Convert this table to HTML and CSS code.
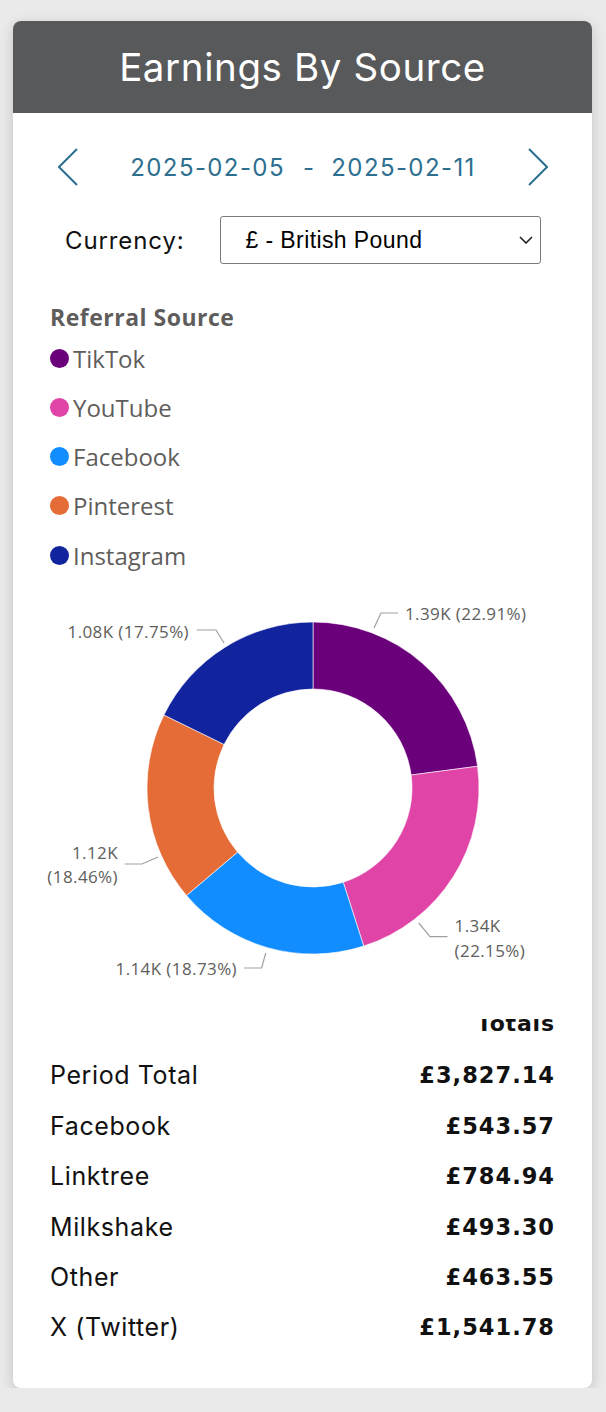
FILE: index.html
```html
<!DOCTYPE html>
<html lang="en">
<head>
<meta charset="utf-8">
<title>Earnings By Source</title>
<link rel="stylesheet" href="styles.css">
</head>
<body>
<div class="card">
  <div class="header"><span class="title">Earnings By Source</span></div>

  <div class="nav">
    <svg class="chev" width="20" height="38" viewBox="0 0 20 38"><polyline points="19,1 1,19 19,37"/></svg>
    <div class="dates"><span>2025-02-05</span><span class="sep">-</span><span>2025-02-11</span></div>
    <svg class="chev" width="20" height="38" viewBox="0 0 20 38"><polyline points="1,1 19,19 1,37"/></svg>
  </div>

  <div class="currency">
    <span class="cur-label">Currency:</span>
    <div class="select">
      <span>£ - British Pound</span>
      <svg class="caret" width="14" height="8" viewBox="0 0 14 8"><polyline points="1,1 7,7 13,1"/></svg>
    </div>
  </div>

  <div class="legend">
    <div class="legend-title">Referral Source</div>
    <div class="legend-item"><span class="dot c-tiktok"></span>TikTok</div>
    <div class="legend-item"><span class="dot c-youtube"></span>YouTube</div>
    <div class="legend-item"><span class="dot c-facebook"></span>Facebook</div>
    <div class="legend-item"><span class="dot c-pinterest"></span>Pinterest</div>
    <div class="legend-item"><span class="dot c-instagram"></span>Instagram</div>
  </div>

  <svg class="donut" width="579" height="400" viewBox="13 590 579 400">
    <g class="slices">
      <path fill="#6b007b" d="M313,622 A166,166 0 0 1 477.57,766.27 L411.15,775.04 A99,99 0 0 0 313,689 Z"/>
      <path fill="#e044a7" d="M477.57,766.27 A166,166 0 0 1 363.70,946.07 L343.24,882.27 A99,99 0 0 0 411.15,775.04 Z"/>
      <path fill="#118dff" d="M363.70,946.07 A166,166 0 0 1 186.50,895.49 L237.56,852.11 A99,99 0 0 0 343.24,882.27 Z"/>
      <path fill="#e66c37" d="M186.50,895.49 A166,166 0 0 1 163.93,714.97 L224.09,744.45 A99,99 0 0 0 237.56,852.11 Z"/>
      <path fill="#12239e" d="M163.93,714.97 A166,166 0 0 1 313,622 L313,689 A99,99 0 0 0 224.09,744.45 Z"/>
    </g>
    <g class="leaders">
      <polyline points="374,628 381,613 398,613"/>
      <polyline points="196.7,630 216,630 224,643"/>
      <polyline points="124.7,864 142,864 158,857"/>
      <polyline points="244,968 261.6,968 265.8,953"/>
      <polyline points="418.8,923 430,936.7 447.5,936.7"/>
    </g>
    <g class="labels">
      <text x="405" y="620">1.39K (22.91%)</text>
      <text x="189" y="638" text-anchor="end">1.08K (17.75%)</text>
      <text x="118" y="859" text-anchor="end">1.12K</text>
      <text x="118" y="883" text-anchor="end">(18.46%)</text>
      <text x="237" y="975" text-anchor="end">1.14K (18.73%)</text>
      <text x="454.6" y="932">1.34K</text>
      <text x="454.6" y="957">(22.15%)</text>
    </g>
  </svg>

  <div class="totals">
    <div class="totals-head"><span>Totals</span></div>
    <div class="row"><span class="row-label">Period Total</span><span class="row-val">£3,827.14</span></div>
    <div class="row"><span class="row-label">Facebook</span><span class="row-val">£543.57</span></div>
    <div class="row"><span class="row-label">Linktree</span><span class="row-val">£784.94</span></div>
    <div class="row"><span class="row-label">Milkshake</span><span class="row-val">£493.30</span></div>
    <div class="row"><span class="row-label">Other</span><span class="row-val">£463.55</span></div>
    <div class="row"><span class="row-label">X (Twitter)</span><span class="row-val">£1,541.78</span></div>
  </div>
</div>
</body>
</html>
```

FILE: styles.css
```css
html, body {
  margin: 0;
  padding: 0;
}

body {
  background: #eaeaea;
  font-family: "Inter", "Liberation Sans", sans-serif;
}

.card {
  margin: 21px 14px 0 13px;
  height: 1367px;
  background: #ffffff;
  border-radius: 8px;
  overflow: hidden;
  box-shadow: 0 4px 14px rgba(0, 0, 0, 0.17);
}

.header {
  height: 92px;
  background: #58595b;
  display: flex;
  align-items: center;
  justify-content: center;
}

.title {
  color: #ffffff;
  font-family: "Inter", sans-serif;
  font-size: 38.5px;
  font-weight: 400;
  letter-spacing: 0.6px;
}

.nav {
  height: 40px;
  margin-top: 34px;
  padding: 0 44px 0 45px;
  display: flex;
  align-items: center;
  justify-content: space-between;
}

.chev polyline {
  fill: none;
  stroke: #2d6f8f;
  stroke-width: 2;
}

.dates {
  color: #2d6f8f;
  font-family: "Inter", sans-serif;
  font-size: 24px;
  letter-spacing: 1.4px;
  display: flex;
  align-items: center;
}

.sep {
  margin: 0 16px 0 18px;
}

.currency {
  height: 48px;
  margin-top: 29px;
  padding-left: 52px;
  display: flex;
  align-items: center;
}

.cur-label {
  width: 154.5px;
  color: #111;
  font-family: "Inter", sans-serif;
  font-size: 24px;
  letter-spacing: 0.9px;
}

.select {
  width: 321px;
  height: 48px;
  box-sizing: border-box;
  border: 1px solid #7a7a7a;
  border-radius: 3px;
  padding: 0 7px 0 25px;
  display: flex;
  align-items: center;
  justify-content: space-between;
  font-family: "Liberation Sans", Arial, sans-serif;
  font-size: 23px;
  letter-spacing: 0.4px;
  color: #000;
}

.caret polyline {
  fill: none;
  stroke: #222;
  stroke-width: 1.6;
}

.legend {
  margin-top: 37.5px;
  padding-left: 37px;
}

.legend-title {
  font-family: "Open Sans", sans-serif;
  font-weight: 700;
  font-size: 23px;
  letter-spacing: 0.5px;
  line-height: 30px;
  color: #5f5d5b;
  margin-bottom: 2px;
}

.legend-item {
  height: 49.25px;
  display: flex;
  align-items: center;
  gap: 4px;
  font-family: "Open Sans", sans-serif;
  font-size: 24px;
  color: #5f5d5b;
}

.dot {
  width: 19px;
  height: 19px;
  border-radius: 50%;
  flex: none;
}

.c-tiktok { background: #6b007b; }
.c-youtube { background: #e044a7; }
.c-facebook { background: #118dff; }
.c-pinterest { background: #e66c37; }
.c-instagram { background: #12239e; }

.donut {
  display: block;
  margin-top: 10.4px;
}

.slices path {
  stroke: #ffffff;
  stroke-width: 0.6;
}

.leaders polyline {
  fill: none;
  stroke: #a19f9d;
  stroke-width: 1.2;
}

.labels text {
  font-family: "Open Sans", sans-serif;
  font-size: 17px;
  letter-spacing: 0.4px;
  fill: #605e5c;
}

.totals {
  margin-top: 29px;
  padding: 0 38px 0 37px;
}

.totals-head {
  height: 31px;
  overflow: hidden;
  text-align: right;
}

.totals-head span {
  display: block;
  margin-top: -10px;
  line-height: 30px;
  font-family: "DejaVu Sans", sans-serif;
  font-weight: 700;
  font-size: 22px;
  letter-spacing: 0.8px;
  margin-right: -0.8px;
  color: #111;
}

.row {
  height: 50.4px;
  display: flex;
  align-items: center;
  justify-content: space-between;
}

.row-label {
  font-family: "Inter", sans-serif;
  font-size: 25px;
  letter-spacing: 0.6px;
  color: #111;
}

.row-val {
  font-family: "DejaVu Sans", sans-serif;
  font-weight: 700;
  font-size: 22.5px;
  letter-spacing: 1px;
  margin-right: -1px;
  color: #111;
}
```
